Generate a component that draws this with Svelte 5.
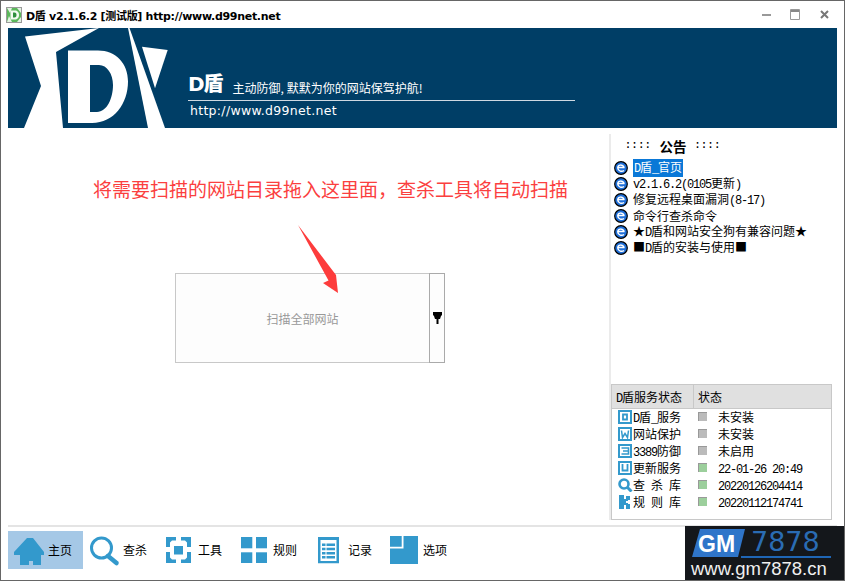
<script>
  const split = (s) => s.split(/([\x00-\x7f]+)/).map((t, i) => ({ t, lat: i % 2 === 1 })).filter((p) => p.t);
  const notices = ['D盾_官页', 'v2.1.6.2(0105更新)', '修复远程桌面漏洞(8-17)', '命令行查杀命令', '★D盾和网站安全狗有兼容问题★', '■D盾的安装与使用■'];
  const services = [
    { icon: 'D', name: 'D盾_服务', ok: false, status: '未安装' },
    { icon: 'W', name: '网站保护', ok: false, status: '未安装' },
    { icon: '3', name: '3389防御', ok: false, status: '未启用' },
    { icon: 'U', name: '更新服务', ok: true, status: '22-01-26 20:49' },
    { icon: 'Q', name: '查 杀 库', ok: true, status: '20220126204414' },
    { icon: 'K', name: '规 则 库', ok: true, status: '20220112174741' }
  ];
  const tools = [
    { id: 'home', label: '主页', active: true },
    { id: 'search', label: '查杀' },
    { id: 'tool', label: '工具' },
    { id: 'rule', label: '规则' },
    { id: 'log', label: '记录' },
    { id: 'opt', label: '选项' }
  ];
</script>

{#snippet mixed(s)}
  {#each split(s) as p}<span class:lat={p.lat}>{p.t}</span>{/each}
{/snippet}

<div class="win">
  <header class="title">
    <svg class="appicon" width="16" height="16" viewBox="0 0 16 16">
      <rect x=".5" y=".5" width="15" height="15" fill="#5cb85c" stroke="#9a9a9a" />
      <path d="M1 1h5L4 6zM11 1h4v5zM1 15l2-6 3 6zM11 15l4-5v5z" fill="#e4f3e4" />
      <path d="M4.500 3.500H9c3 0 4 2.500 4 4.500s-1 4.500-4 4.500H4.500z" fill="#f4fbf4" />
      <path d="M7 5.500v5h1.500c1.500 0 2-1.200 2-2.500s-.5-2.500-2-2.500z" fill="#2f8f3f" />
    </svg>
    <span class="title-text">D盾 v2.1.6.2 [测试版] http://www.d99net.net</span>
    <div class="controls">
      <svg width="9" height="12" viewBox="0 0 9 12"><rect y="5" width="9" height="2" fill="#999" /></svg>
      <svg width="11" height="11" viewBox="0 0 11 11"><path d="M.5.500h9v10h-9z" fill="none" stroke="#999" /><rect x="1" y="1" width="8" height="2" fill="#888" /></svg>
      <svg width="9" height="9" viewBox="0 0 9 9"><path d="M1 1l7 7M8 1l-7 7" stroke="#777" stroke-width="2" /></svg>
    </div>
  </header>

  <section class="banner">
    <svg class="logo" width="170" height="100" viewBox="0 0 170 100">
      <g fill="#fff">
        <path d="M17 8.500L91 0 48 24 55 100H16L33 58z" />
        <path d="M120 0h1.500L157 100h-17z" />
        <path d="M134 18.700l25.700 3.300-12.700 38.300z" />
        <path fill-rule="evenodd" d="M60 22.500H90c18 0 30 13 30 31 0 22-14 41.500-36 41.500H60z M82 37v47h7c10 0 16-14 16-27 0-11-6-20-14-20z" />
      </g>
    </svg>
    <div class="brand">
      <div class="slogan"><b>D盾</b><span>主动防御, 默默为你的网站保驾护航!</span></div>
      <div class="url">http://www.d99net.net</div>
    </div>
  </section>

  <div class="content">
    <main class="main">
      <h1>将需要扫描的网站目录拖入这里面，查杀工具将自动扫描</h1>
      <div class="scan">
        <button class="scan-all">扫描全部网站</button>
        <button class="scan-more" aria-label="更多">
          <svg width="9" height="13" viewBox="0 0 9 13"><path d="M0 0h9v3l-1 1-1 3H5.500v5h-2V7H2L1 4 0 3z" fill="#000" /></svg>
        </button>
      </div>
      <svg class="arrow" width="50" height="75" viewBox="0 0 50 75">
        <path d="M1 1L39 51 41 69 26 59 31.500 56.500z" fill="#fd3c3c" />
      </svg>
    </main>

    <aside class="side">
      <div class="notice-head"><span>::::</span><b>公告</b><span>::::</span></div>
      <ul class="notices">
        {#each notices as n, i}
          <li>
            <svg width="14" height="14" viewBox="0 0 14 14">
              <circle cx="7" cy="7" r="6.300" fill="#1f6fd8" stroke="#000" stroke-width="1.200" />
              <path d="M3.500 6.500h7M10 9.500C8 11 4 10.500 3.800 7 3.700 3.500 8.500 3 10.300 6.500" fill="none" stroke="#fff" stroke-width="1.500" />
            </svg>
            <span class="ntext" class:sel={i === 0}>{@render mixed(n)}</span>
          </li>
        {/each}
      </ul>
      <div class="services">
        <div class="svc-head"><div class="c1">{@render mixed('D盾服务状态')}</div><div class="c2">状态</div></div>
        {#each services as s}
          <div class="svc-row">
            <span class="svc-icon">
              {#if s.icon === 'Q'}
                <svg width="15" height="14" viewBox="0 0 15 14"><circle cx="6" cy="6" r="4.500" fill="none" stroke="#3399cc" stroke-width="2.600" /><path d="M9 9l4.500 4.500" stroke="#3399cc" stroke-width="3" /></svg>
              {:else if s.icon === 'K'}
                <svg width="15" height="14" viewBox="0 0 15 14"><path d="M1 0h5v4h2V1h4v4h-2v1H8v2h2v1h2v5H8v-4H6v4H1z" fill="#3399cc" /></svg>
              {:else}
                <svg width="15" height="14" viewBox="0 0 15 14">
                  <rect x="1" y="1" width="12" height="12" fill="#fff" stroke="#3399cc" stroke-width="2" />
                  {#if s.icon === 'D'}<path d="M5 4.500h4v5H5z" fill="none" stroke="#3399cc" stroke-width="1.800" />
                  {:else if s.icon === 'W'}<path d="M3.500 3.500l1 7 2.500-4 2.500 4 1-7" fill="none" stroke="#3399cc" stroke-width="1.500" />
                  {:else if s.icon === '3'}<path d="M3.500 4h7v6h-7M5 7h5" fill="none" stroke="#3399cc" stroke-width="1.600" />
                  {:else}<path d="M4.500 3v6.500h5V3" fill="none" stroke="#3399cc" stroke-width="1.800" />{/if}
                </svg>
              {/if}
            </span>
            <span class="svc-name">{@render mixed(s.name)}</span>
            <span class="dot" class:ok={s.ok}></span>
            <span class="svc-status">{@render mixed(s.status)}</span>
          </div>
        {/each}
      </div>
    </aside>
  </div>

  <nav class="toolbar">
    {#each tools as t}
      <div class="tool" class:active={t.active}>
        <svg width="40" height="38" viewBox="0 0 40 38">
          {#if t.id === 'home'}
            <path d="M6 21L19 7h6l11 14v3h-3v10H25v-4h-4v4H12V24H6z" fill="#3399cc" />
          {:else if t.id === 'search'}
            <circle cx="18.500" cy="17" r="10" fill="none" stroke="#3399cc" stroke-width="3" />
            <path d="M25 25l8.500 7" stroke="#3399cc" stroke-width="4.500" stroke-linecap="round" />
          {:else if t.id === 'tool'}
            <g fill="#3399cc">
              <path d="M8 6h10v3.500h-4l-2 2V16H8zM33 6H23v3.500h4l2 2V16h4zM8 21v11h10v-3.500h-4l-2-2V21zM33 21v11H23v-3.500h4l2-2V21z" />
              <rect x="16" y="15" width="9" height="8.500" />
            </g>
          {:else if t.id === 'rule'}
            <g fill="#3399cc"><rect x="8" y="6" width="11.300" height="11.300" /><rect x="23" y="6" width="11" height="11.300" /><rect x="8" y="21.300" width="11.300" height="10.700" /><rect x="23" y="21.300" width="11" height="10.700" /></g>
          {:else if t.id === 'log'}
            <path fill-rule="evenodd" fill="#3399cc" d="M10 6h21v26.300H10zM12.500 9v21h16V9z" />
            <path d="M14 13.700h13M14 18h13M14 22.300h13M14 26.300h13" stroke="#3399cc" stroke-width="2.500" />
            <path d="M18 12v16" stroke="#fff" stroke-width="1" />
          {:else}
            <path d="M7 5h11.700v10.700H7zM20.500 5H35v28H7V17.500h13.500z" fill="#3399cc" />
          {/if}
        </svg>
        <span>{t.label}</span>
      </div>
    {/each}
  </nav>

  <div class="mark">
    <svg width="160" height="55" viewBox="0 0 160 55">
      <path d="M15 3h45l-7 28H7z" fill="#2f75c9" />
      <text x="13" y="26" class="gm">GM</text>
      <text x="66" y="25" class="num">7878</text>
      <path d="M56 31h90" stroke="#1f66b5" stroke-width="2" />
      <text x="6" y="49" class="site">www.gm7878.cn</text>
    </svg>
  </div>
</div>

<style>
  :global(body) { margin: 0; background: #fff; }
  * { box-sizing: border-box; }
  .win {
    position: relative; width: 845px; height: 581px; border: 1px solid #666; background: #fff;
    display: flex; flex-direction: column; overflow: hidden;
    font-family: "Noto Sans CJK SC", sans-serif; font-size: 12px; color: #000;
  }
  .lat { font-family: "Liberation Mono", monospace; font-size: 12px; letter-spacing: -1.200px; }
  .title { height: 27px; flex: none; display: flex; align-items: center; padding-left: 5px; }
  .appicon { margin-right: 4px; }
  .title-text { font-family: "DejaVu Sans", "Noto Sans CJK SC", sans-serif; font-weight: 700; font-size: 11px; letter-spacing: -.3px; }
  .controls { margin-left: auto; display: flex; align-items: center; gap: 19px; padding-right: 15px; }
  .banner { margin: 0 7px; height: 100px; flex: none; background: #003e66; display: flex; overflow: hidden; }
  .logo { flex: none; }
  .brand { color: #fff; margin-left: 10px; width: 387px; }
  .slogan { height: 73px; border-bottom: 1px solid #cfd9e2; display: flex; align-items: flex-end; line-height: 1; white-space: nowrap; }
  .slogan b { font-size: 20px; margin-bottom: 6px; font-family: "DejaVu Sans", "Noto Sans CJK SC", sans-serif; font-weight: 900; letter-spacing: -1px; }
  .slogan span { font-size: 12px; margin: 0 0 6px 10px; }
  .url { font-family: "DejaVu Sans", sans-serif; font-size: 12.500px; margin: 2px 0 0 2px; letter-spacing: .3px; }
  .content { flex: 1; display: flex; min-height: 0; }
  .main { position: relative; width: 608px; flex: none; }
  h1 { margin: 0; padding: 47px 0 0 92px; font-size: 19px; line-height: 28px; font-weight: 400; color: #fb3f3f; white-space: nowrap; }
  .scan { display: flex; width: 270px; height: 90px; margin: 70px 0 0 174px; }
  .scan button { font: inherit; background: #fdfdfd; padding: 0; height: 100%; border-radius: 0; display: flex; align-items: center; justify-content: center; }
  .scan-all { flex: 1; border: 1px solid #c8c8c8; border-right: 0; color: #999; }
  .scan-more { width: 16px; border: 1px solid #aaa; }
  .arrow { position: absolute; left: 296px; top: 96px; }
  .side { flex: 1; margin-top: 6px; border-left: 2px solid #ebebeb; height: 386px; display: flex; flex-direction: column; }
  .notice-head { display: flex; gap: 8px; padding: 0 0 3px 14px; height: 26px; align-items: center; white-space: nowrap; }
  .notice-head span { letter-spacing: .6px; font-family: "Liberation Mono", monospace; font-size: 10px; font-weight: 700; }
  .notice-head b { font-size: 13.500px; }
  .notices { list-style: none; margin: 0; padding: 0 0 0 3px; }
  .notices li { height: 16px; display: flex; align-items: center; gap: 5px; white-space: nowrap; line-height: 16px; }
  .ntext.sel { background: #0a78d7; color: #fff; padding: 0 1px; }
  .services { margin: auto 0 0 0; width: 221px; height: 136px; border: 1px solid #c8c8c8; }
  .svc-head { height: 24px; background: #e0e0e0; border-bottom: 1px solid #c8c8c8; display: flex; align-items: center; margin-bottom: -1px; }
  .c1 { width: 82px; height: 100%; padding-left: 4px; border-right: 1px solid #c8c8c8; line-height: 23px; }
  .c2 { padding-left: 4px; }
  .svc-row { height: 17px; display: flex; align-items: center; padding-left: 6px; white-space: nowrap; }
  .svc-icon { width: 15px; height: 14px; flex: none; display: flex; }
  .svc-name { width: 65px; flex: none; }
  .dot { width: 9px; height: 9px; background: #bbb; border-left: 1px solid #999; border-top: 1px solid #999; flex: none; }
  .dot.ok { background: #9ccf9c; }
  .svc-status { margin-left: 11px; }
  .toolbar { margin: 0 7px; height: 55px; flex: none; border-top: 2px solid #e4e4e4; padding-top: 4px; display: flex; align-items: flex-start; }
  .tool { width: 75px; height: 38px; display: flex; align-items: center; }
  .tool.active { background: #a5c8e6; }
  .tool span { font-size: 12px; margin-top: -2px; }
  .mark { position: absolute; right: -1px; bottom: -1px; width: 160px; height: 55px; background: #14171b; }
  .mark svg { display: block; }
  .gm { font-family: "Liberation Sans", sans-serif; font-weight: 700; font-size: 23px; fill: #fff; }
  .num { font-family: "DejaVu Sans", sans-serif; font-size: 27px; fill: #2a6cb3; }
  .site { font-family: "Liberation Sans", sans-serif; font-size: 18.500px; fill: #f0f0f0; }
</style>
